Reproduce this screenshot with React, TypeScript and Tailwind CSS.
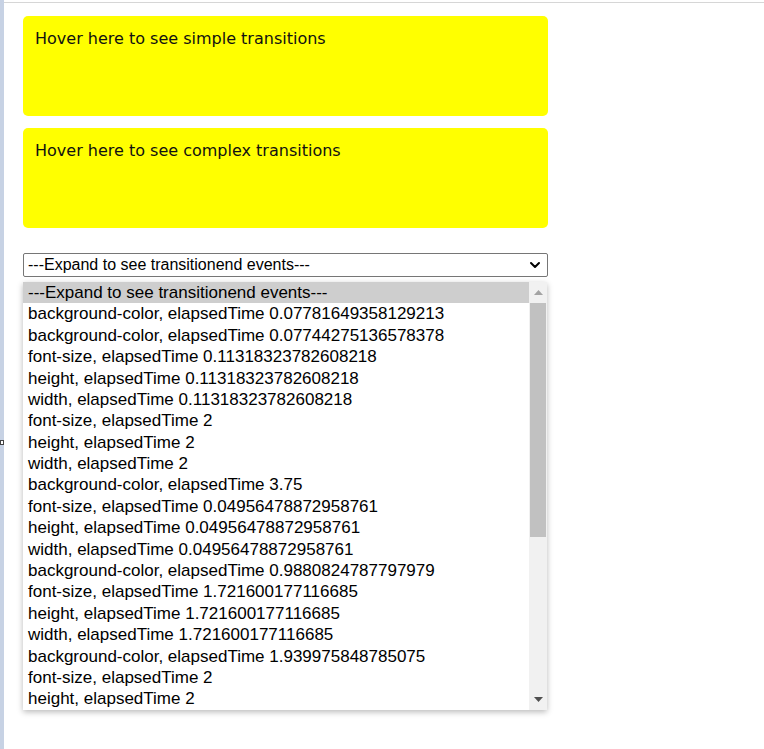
import { ChevronDown } from 'lucide-react';

const EVENTS = [
  'background-color, elapsedTime 0.07781649358129213',
  'background-color, elapsedTime 0.07744275136578378',
  'font-size, elapsedTime 0.11318323782608218',
  'height, elapsedTime 0.11318323782608218',
  'width, elapsedTime 0.11318323782608218',
  'font-size, elapsedTime 2',
  'height, elapsedTime 2',
  'width, elapsedTime 2',
  'background-color, elapsedTime 3.75',
  'font-size, elapsedTime 0.04956478872958761',
  'height, elapsedTime 0.04956478872958761',
  'width, elapsedTime 0.04956478872958761',
  'background-color, elapsedTime 0.9880824787797979',
  'font-size, elapsedTime 1.721600177116685',
  'height, elapsedTime 1.721600177116685',
  'width, elapsedTime 1.721600177116685',
  'background-color, elapsedTime 1.939975848785075',
  'font-size, elapsedTime 2',
  'height, elapsedTime 2',
];

const PLACEHOLDER = '---Expand to see transitionend events---';

function HoverBox({ label }: { label: string }) {
  return (
    <div className="h-[100px] w-[525px] rounded-[5px] bg-[#ffff00] px-3 pt-[11px] font-['Verdana','DejaVu_Sans',sans-serif] text-[16px] text-[#111]">
      {label}
    </div>
  );
}

export default function App() {
  return (
    <div className="flex min-h-[749px] bg-white">
      <div className="relative w-1 shrink-0 bg-[#c7d2e4]">
        <div className="absolute left-0 top-[440px] h-[5px] w-[4px] border border-[#444] bg-white" />
      </div>
      <div className="flex-1 pt-[2px]">
        <div className="border-t border-[#d6d6d6] pl-[19px] pt-[13px]">
          <div className="flex flex-col gap-[12px]">
            <HoverBox label="Hover here to see simple transitions" />
            <HoverBox label="Hover here to see complex transitions" />
          </div>

          <div className="relative mt-[25px] w-[525px] font-['Liberation_Sans',Arial,sans-serif] text-black">
            <div className="flex h-[24px] items-center justify-between rounded-[2px] border border-[#767676] bg-white pl-[4px] pr-[4px] text-[16px]">
              <span>{PLACEHOLDER}</span>
              <ChevronDown className="h-4 w-4 text-black" strokeWidth={3} />
            </div>

            {/* open dropdown */}
            <div className="absolute left-0 top-[29px] flex h-[428px] w-[524px] overflow-hidden bg-white text-[17px] shadow-[0_2px_6px_rgba(0,0,0,0.28)]">
              <div className="flex-1">
                <div className="flex h-[21.4px] items-center bg-[#cecece] px-[5px]">{PLACEHOLDER}</div>
                {EVENTS.map((e, i) => (
                  <div key={i} className="flex h-[21.4px] items-center px-[5px]">
                    {e}
                  </div>
                ))}
              </div>
              <div className="flex w-[18px] flex-col bg-[#f1f1f1]">
                <div className="flex h-[21px] items-center justify-center">
                  <svg width="9" height="5" viewBox="0 0 9 5">
                    <path d="M4.5 0 L9 5 L0 5 Z" fill="#a3a3a3" />
                  </svg>
                </div>
                <div className="mx-[1px] h-[234px] bg-[#c1c1c1]" />
                <div className="flex-1" />
                <div className="flex h-[21px] items-center justify-center">
                  <svg width="9" height="5" viewBox="0 0 9 5">
                    <path d="M0 0 L9 0 L4.5 5 Z" fill="#505050" />
                  </svg>
                </div>
              </div>
            </div>
          </div>
        </div>
      </div>
    </div>
  );
}
